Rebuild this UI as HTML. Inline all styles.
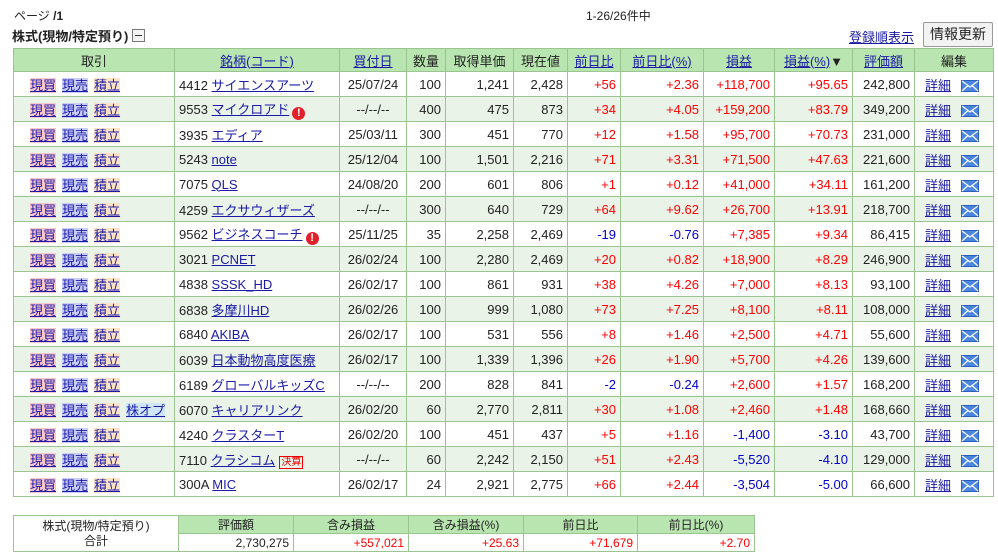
<!DOCTYPE html>
<html><head><meta charset="utf-8"><style>
body{margin:0;width:998px;height:554px;background:#fff;font-family:"Liberation Sans","Noto Sans CJK JP",sans-serif;font-size:12px;color:#222;position:relative;overflow:hidden}
a{color:#1a1aa6;text-decoration:underline}
.abs{position:absolute}
table{border-collapse:collapse;table-layout:fixed}
td,th{border:1px solid #9cc491;padding:0 4px;white-space:nowrap;font-weight:normal;font-size:13px}
#m th{background:#b9e6b0;height:22px;text-align:center}
#m td{height:24px}
#m tr.e td{background:#eaf3e8}
.r{text-align:right}.c{text-align:center}
.p{color:#f00}.n{color:#00c}
.b1{background:#fcc8cc}.b2{background:#c8cdfa}.b3{background:#fde2c6}.b4{background:#cde6fa}
.tr a{margin-right:6px}
.ex{display:inline-block;width:13px;height:13px;border-radius:50%;background:#e0202a;color:#fff;font-size:11px;line-height:13px;text-align:center;font-weight:bold;vertical-align:-2px;margin-left:3px}
.ks{display:inline-block;border:1px solid #e00;color:#e00;font-size:10px;line-height:11px;padding:0 1px;margin-left:4px}
.mail{display:inline-block;width:18px;height:12px;vertical-align:-2px;margin-left:10px}
#s td{height:17px;font-size:12px}
#s .h{background:#b9e6b0;text-align:center}
</style></head><body>
<div class="abs" style="left:14px;top:7px">ページ <b>/1</b></div>
<div class="abs" style="left:586px;top:7px">1-26/26件中</div>
<div class="abs" style="left:12px;top:26px;font-weight:bold;font-size:13px">株式(現物/特定預り) <span style="display:inline-block;width:11px;height:11px;border:1px solid #777;vertical-align:-1px;position:relative;background:#f4f4f4"><span style="position:absolute;left:2px;top:5px;width:7px;height:1px;background:#333"></span></span></div>
<a class="abs" style="left:849px;top:27px;font-size:13px" href="#">登録順表示</a>
<div class="abs" style="left:923px;top:22px;width:68px;height:23px;border:1px solid #999;border-radius:2px;background:#f3f3f3;font-size:14px;text-align:center;line-height:23px">情報更新</div>
<table id="m" class="abs" style="left:13px;top:48px;width:981px">
<colgroup><col style="width:161px"><col style="width:165px"><col style="width:67px"><col style="width:39px"><col style="width:68px"><col style="width:54px"><col style="width:53px"><col style="width:83px"><col style="width:71px"><col style="width:78px"><col style="width:62px"><col style="width:79px"></colgroup>
<tr><th>取引</th><th><a href="#">銘柄(コード)</a></th><th><a href="#">買付日</a></th><th>数量</th><th>取得単価</th><th>現在値</th><th><a href="#">前日比</a></th><th><a href="#">前日比(%)</a></th><th><a href="#">損益</a></th><th><a href="#">損益(%)</a>▼</th><th><a href="#">評価額</a></th><th>編集</th></tr>
</table>
<script>
var d=[
["4412","サイエンスアーツ","","25/07/24","100","1,241","2,428","+56","+2.36","+118,700","+95.65","242,800"],
["9553","マイクロアド","!","--/--/--","400","475","873","+34","+4.05","+159,200","+83.79","349,200"],
["3935","エディア","","25/03/11","300","451","770","+12","+1.58","+95,700","+70.73","231,000"],
["5243","note","","25/12/04","100","1,501","2,216","+71","+3.31","+71,500","+47.63","221,600"],
["7075","QLS","","24/08/20","200","601","806","+1","+0.12","+41,000","+34.11","161,200"],
["4259","エクサウィザーズ","","--/--/--","300","640","729","+64","+9.62","+26,700","+13.91","218,700"],
["9562","ビジネスコーチ","!","25/11/25","35","2,258","2,469","-19","-0.76","+7,385","+9.34","86,415"],
["3021","PCNET","","26/02/24","100","2,280","2,469","+20","+0.82","+18,900","+8.29","246,900"],
["4838","SSSK_HD","","26/02/17","100","861","931","+38","+4.26","+7,000","+8.13","93,100"],
["6838","多摩川HD","","26/02/26","100","999","1,080","+73","+7.25","+8,100","+8.11","108,000"],
["6840","AKIBA","","26/02/17","100","531","556","+8","+1.46","+2,500","+4.71","55,600"],
["6039","日本動物高度医療","","26/02/17","100","1,339","1,396","+26","+1.90","+5,700","+4.26","139,600"],
["6189","グローバルキッズC","","--/--/--","200","828","841","-2","-0.24","+2,600","+1.57","168,200"],
["6070","キャリアリンク","o","26/02/20","60","2,770","2,811","+30","+1.08","+2,460","+1.48","168,660"],
["4240","クラスターT","","26/02/20","100","451","437","+5","+1.16","-1,400","-3.10","43,700"],
["7110","クラシコム","k","--/--/--","60","2,242","2,150","+51","+2.43","-5,520","-4.10","129,000"],
["300A","MIC","","26/02/17","24","2,921","2,775","+66","+2.44","-3,504","-5.00","66,600"]];
var mail='<svg class="mail" viewBox="0 0 18 12"><rect x="0" y="0" width="18" height="12" fill="#2a5fc0"/><rect x="1" y="1" width="16" height="10" fill="#4a86e0"/><path d="M1 1L9 7L17 1M1 11L7 5.5M17 11L11 5.5" stroke="#fff" stroke-width="1.2" fill="none"/></svg>';
var t=document.getElementById('m'),h='';
function cl(v){return v[0]=='-'?'n':'p'}
d.forEach(function(r,i){
h+='<tr'+(i%2?' class="e"':'')+'><td class="tr" style="padding-left:16px"><a class="b1">現買</a><a class="b2">現売</a><a class="b3">積立</a>'+(r[2]=='o'?'<a class="b4">株オプ</a>':'')+'</td>';
h+='<td>'+r[0]+' <a href="#">'+r[1]+'</a>'+(r[2]=='!'?'<span class="ex">!</span>':'')+(r[2]=='k'?'<span class="ks">決算</span>':'')+'</td>';
h+='<td class="c">'+r[3]+'</td><td class="r">'+r[4]+'</td><td class="r">'+r[5]+'</td><td class="r">'+r[6]+'</td>';
for(var k=7;k<11;k++)h+='<td class="r '+cl(r[k])+'">'+r[k]+'</td>';
h+='<td class="r">'+r[11]+'</td><td style="padding-left:10px"><a href="#">詳細</a>'+mail+'</td></tr>';
});
t.insertAdjacentHTML('beforeend',h);
</script>
<table id="s" class="abs" style="left:13px;top:515px;width:741px">
<colgroup><col style="width:165px"><col style="width:115px"><col style="width:115px"><col style="width:115px"><col style="width:114px"><col style="width:117px"></colgroup>
<tr><td rowspan="2" class="c" style="line-height:15px">株式(現物/特定預り)<br>合計</td><td class="h">評価額</td><td class="h">含み損益</td><td class="h">含み損益(%)</td><td class="h">前日比</td><td class="h">前日比(%)</td></tr>
<tr><td class="r">2,730,275</td><td class="r p">+557,021</td><td class="r p">+25.63</td><td class="r p">+71,679</td><td class="r p">+2.70</td></tr>
</table>
</body></html>
